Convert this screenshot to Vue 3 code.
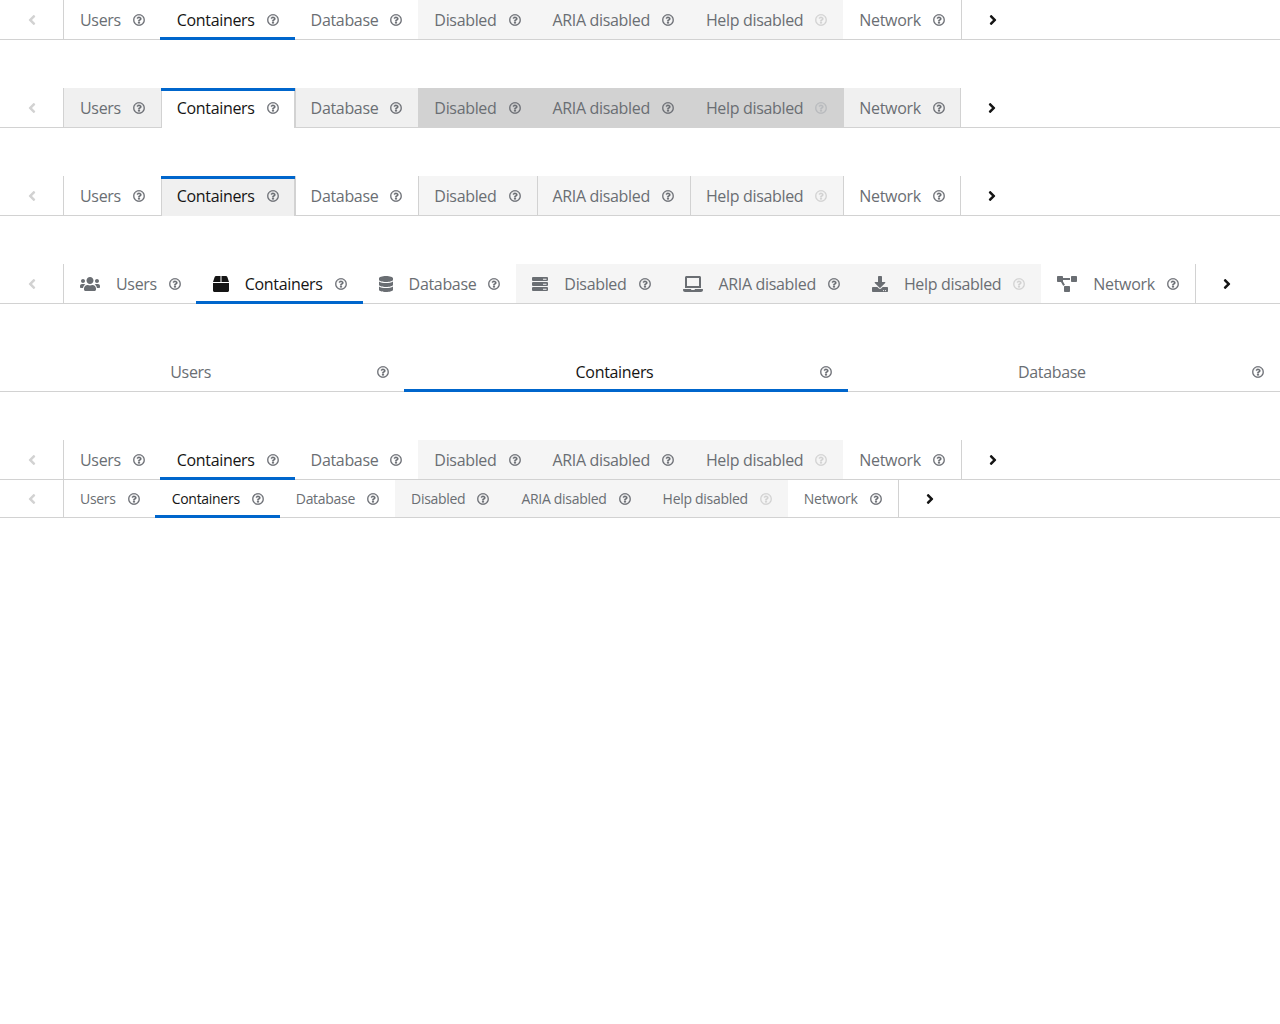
<script setup>
const helpPath = 'M256 8C119.043 8 8 119.083 8 256c0 136.997 111.043 248 248 248s248-111.003 248-248C504 119.083 392.957 8 256 8zm0 448c-110.532 0-200-89.431-200-200 0-110.495 89.472-200 200-200 110.491 0 200 89.471 200 200 0 110.53-89.431 200-200 200zm107.244-255.2c0 67.052-72.421 68.084-72.421 92.863V300c0 6.627-5.373 12-12 12h-45.647c-6.627 0-12-5.373-12-12v-8.659c0-35.745 27.1-50.034 47.579-61.516 17.561-9.845 28.324-16.541 28.324-29.579 0-17.246-21.999-28.693-39.784-28.693-23.189 0-33.894 10.977-48.942 29.969-4.057 5.12-11.46 6.071-16.666 2.124l-27.824-21.098c-5.107-3.872-6.251-11.066-2.644-16.363C184.846 131.491 214.94 112 261.794 112c49.071 0 101.45 38.304 101.45 88.8zM298 368c0 23.159-18.841 42-42 42s-42-18.841-42-42 18.841-42 42-42 42 18.841 42 42z'
const leftPath = 'M31.7 239l136-136c9.4-9.4 24.6-9.4 33.9 0l22.6 22.6c9.4 9.4 9.4 24.6 0 33.9L127.9 256l96.4 96.4c9.4 9.4 9.4 24.6 0 33.9L201.7 409c-9.4 9.4-24.6 9.4-33.9 0l-136-136c-9.5-9.4-9.5-24.6-.1-34z'
const rightPath = 'M224.3 273l-136 136c-9.4 9.4-24.6 9.4-33.9 0l-22.6-22.6c-9.4-9.4-9.4-24.6 0-33.9l96.4-96.4-96.4-96.4c-9.4-9.4-9.4-24.6 0-33.9L54.3 103c9.4-9.4 24.6-9.4 33.9 0l136 136c9.5 9.4 9.5 24.6.1 34z'

const icons = {
  users: { w: 640, d: 'M96 224c35.3 0 64-28.7 64-64s-28.7-64-64-64-64 28.7-64 64 28.7 64 64 64zm448 0c35.3 0 64-28.7 64-64s-28.7-64-64-64-64 28.7-64 64 28.7 64 64 64zm32 32h-64c-17.6 0-33.5 7.1-45.1 18.6 40.3 22.1 68.9 62 75.1 109.4h66c17.7 0 32-14.3 32-32v-32c0-35.3-28.7-64-64-64zm-256 0c61.9 0 112-50.1 112-112S381.9 32 320 32 208 82.1 208 144s50.1 112 112 112zm76.8 32h-8.3c-20.8 10-43.9 16-68.5 16s-47.6-6-68.5-16h-8.3C179.6 288 128 339.6 128 403.2V432c0 26.5 21.5 48 48 48h288c26.5 0 48-21.5 48-48v-28.8c0-63.6-51.6-115.2-115.2-115.2zm-223.7-13.4C161.5 263.1 145.6 256 128 256H64c-35.3 0-64 28.7-64 64v32c0 17.7 14.3 32 32 32h65.9c6.3-47.4 34.9-87.3 75.2-109.4z' },
  box: { w: 512, d: 'M509.5 184.6L458.9 32.8C452.4 13.2 434.1 0 413.4 0H272v192h238.7c-.4-2.5-.4-5-1.2-7.4zM240 0H98.6c-20.7 0-39 13.2-45.5 32.8L2.5 184.6c-.8 2.4-.8 4.9-1.2 7.4H240V0zM0 224v240c0 26.5 21.5 48 48 48h416c26.5 0 48-21.5 48-48V224H0z' },
  database: { w: 448, d: 'M448 73.143v45.714C448 159.143 347.667 192 224 192S0 159.143 0 118.857V73.143C0 32.857 100.333 0 224 0s224 32.857 224 73.143zM448 176v102.857C448 319.143 347.667 352 224 352S0 319.143 0 278.857V176c48.125 33.143 136.208 48.572 224 48.572S399.874 209.143 448 176zm0 160v102.857C448 479.143 347.667 512 224 512S0 479.143 0 438.857V336c48.125 33.143 136.208 48.572 224 48.572S399.874 369.143 448 336z' },
  server: { w: 512, d: 'M32 32h448a32 32 0 0 1 32 32v64a32 32 0 0 1-32 32H32a32 32 0 0 1-32-32V64a32 32 0 0 1 32-32zm320 56v32h112V88zM32 192h448a32 32 0 0 1 32 32v64a32 32 0 0 1-32 32H32a32 32 0 0 1-32-32v-64a32 32 0 0 1 32-32zm320 56v32h112v-32zM32 352h448a32 32 0 0 1 32 32v64a32 32 0 0 1-32 32H32a32 32 0 0 1-32-32v-64a32 32 0 0 1 32-32zm320 56v32h112v-32z' },
  laptop: { w: 640, d: 'M624 416H381.54c-.74 19.81-14.71 32-32.74 32H288c-18.69 0-33.02-17.47-32.77-32H16c-8.8 0-16 7.2-16 16v16c0 35.2 28.8 64 64 64h512c35.2 0 64-28.8 64-64v-16c0-8.8-7.2-16-16-16zM576 48c0-26.4-21.6-48-48-48H112C85.6 0 64 21.6 64 48v336h512V48zm-64 272H128V64h384v256z' },
  download: { w: 512, d: 'M216 0h80c13.3 0 24 10.7 24 24v168h87.7c17.8 0 26.7 21.5 14.1 34.1L269.7 378.3c-7.5 7.5-19.8 7.5-27.3 0L90.1 226.1c-12.6-12.6-3.7-34.1 14.1-34.1H192V24c0-13.3 10.7-24 24-24zm296 376v112c0 13.3-10.7 24-24 24H24c-13.3 0-24-10.7-24-24V376c0-13.3 10.7-24 24-24h146.7l49 49c20.1 20.1 52.5 20.1 72.6 0l49-49H488c13.3 0 24 10.7 24 24zm-124 88c0-11-9-20-20-20s-20 9-20 20 9 20 20 20 20-9 20-20zm64 0c0-11-9-20-20-20s-20 9-20 20 9 20 20 20 20-9 20-20z' },
  network: { w: 640, d: 'M384 320H256c-17.67 0-32 14.33-32 32v128c0 17.67 14.33 32 32 32h128c17.67 0 32-14.33 32-32V352c0-17.67-14.33-32-32-32zM192 32c0-17.67-14.33-32-32-32H32C14.33 0 0 14.33 0 32v128c0 17.67 14.33 32 32 32h95.72l73.16 128.04C211.98 300.98 232.4 288 256 288h.28L192 175.51V128h224V64H192V32zM608 0H480c-17.67 0-32 14.33-32 32v128c0 17.67 14.33 32 32 32h128c17.67 0 32-14.33 32-32V32c0-17.67-14.33-32-32-32z' }
}

const allTabs = [
  { label: 'Users', icon: 'users' },
  { label: 'Containers', icon: 'box', active: true },
  { label: 'Database', icon: 'database' },
  { label: 'Disabled', icon: 'server', disabled: true },
  { label: 'ARIA disabled', icon: 'laptop', disabled: true },
  { label: 'Help disabled', icon: 'download', disabled: true, helpOff: true },
  { label: 'Network', icon: 'network' }
]

const rows = [
  { cls: '', tabs: allTabs },
  { cls: 'box', tabs: allTabs },
  { cls: 'box light', tabs: allTabs },
  { cls: 'with-icons', tabs: allTabs, showIcons: true },
  { cls: 'fill', tabs: allTabs.slice(0, 3), noScroll: true },
  { cls: 'tight', tabs: allTabs },
  { cls: 'small', tabs: allTabs }
]
</script>

<template>
  <div class="page">
    <div v-for="(row, i) in rows" :key="i" class="tabs" :class="row.cls">
      <button v-if="!row.noScroll" class="scroll left">
        <svg viewBox="0 0 256 512"><path :d="leftPath" /></svg>
      </button>
      <div
        v-for="tab in row.tabs"
        :key="tab.label"
        class="tab"
        :class="{ active: tab.active, disabled: tab.disabled }"
      >
        <svg
          v-if="row.showIcons"
          class="tab-icon"
          :viewBox="`0 0 ${icons[tab.icon].w} 512`"
        >
          <path :d="icons[tab.icon].d" fill-rule="evenodd" />
        </svg>
        <span class="tab-text">{{ tab.label }}</span>
        <svg class="help" :class="{ off: tab.helpOff }" viewBox="0 0 512 512"><path :d="helpPath" /></svg>
      </div>
      <button v-if="!row.noScroll" class="scroll right">
        <svg viewBox="0 0 256 512"><path :d="rightPath" /></svg>
      </button>
    </div>
  </div>
</template>

<style scoped>
.page {
  font-family: "Open Sans", sans-serif;
  font-size: 16px;
  letter-spacing: -0.33px;
  color: #6a6e73;
}
.tabs {
  display: flex;
  height: 40px;
  box-sizing: border-box;
  border-bottom: 1px solid #d2d2d2;
  margin-bottom: 48px;
}
.tabs.tight {
  margin-bottom: 0;
}
.tabs.small {
  height: 38px;
  font-size: 14px;
  letter-spacing: -0.29px;
  margin-bottom: 0;
}
.scroll {
  width: 64px;
  flex: none;
  padding: 0;
  border: none;
  background: none;
  display: flex;
  align-items: center;
  justify-content: center;
}
.scroll svg {
  width: 8px;
  height: 16px;
  fill: #151515;
}
.scroll.left {
  border-right: 1px solid #d2d2d2;
}
.scroll.left svg {
  fill: #d2d2d2;
}
.scroll.right {
  border-left: 1px solid #d2d2d2;
}
.tab {
  position: relative;
  display: flex;
  align-items: center;
  flex: none;
  padding: 0 16px;
  box-sizing: border-box;
  white-space: nowrap;
}
.tab.active {
  color: #151515;
}
.tab.active::after {
  content: "";
  position: absolute;
  left: -1px;
  right: 0;
  bottom: -1px;
  height: 3px;
  background: #06c;
}
.tab.disabled {
  background: #f5f5f5;
}
.tab-icon {
  height: 16px;
  margin-right: 16px;
  fill: currentColor;
  flex: none;
}
.help {
  width: 12px;
  height: 12px;
  margin-left: 12px;
  fill: #6a6e73;
  stroke: #6a6e73;
  stroke-width: 10;
  flex: none;
}
.help.off {
  fill: #d2d2d2;
  stroke: #d2d2d2;
}

/* boxed */
.box .tab {
  background: #f0f0f0;
}
.box .tab + .tab {
  border-left: 1px solid #d2d2d2;
  padding-left: 15px;
}
.box .tab.disabled {
  background: #d2d2d2;
}
.box .tab.active {
  background: #fff;
  border-right: 1px solid #d2d2d2;
  padding-right: 15px;
}
.box .tab.active::before {
  content: "";
  position: absolute;
  left: -1px;
  right: -1px;
  top: 0;
  height: 3px;
  background: #06c;
}
.box .tab.active::after {
  left: 0;
  height: 1px;
  background: #fff;
}
.box .help.off {
  fill: #b8bbbe;
  stroke: #b8bbbe;
}
.box .scroll.right {
  margin-left: -1px;
}
.box .tab:last-of-type {
  border-right: 1px solid #d2d2d2;
  padding-right: 15px;
}
.box.light .tab {
  background: #fff;
}
.box.light .tab.disabled {
  background: #f5f5f5;
}
.box.light .help.off {
  fill: #d2d2d2;
  stroke: #d2d2d2;
}
.box.light .tab.active {
  background: #f0f0f0;
}
.box.light .tab.active::after {
  background: #f0f0f0;
}

/* fill */
.fill .tab {
  flex: 1 1 auto;
}
.fill .tab-text {
  flex: 1;
  text-align: center;
}
</style>

<style>
body {
  margin: 0;
  background: #fff;
}
</style>
